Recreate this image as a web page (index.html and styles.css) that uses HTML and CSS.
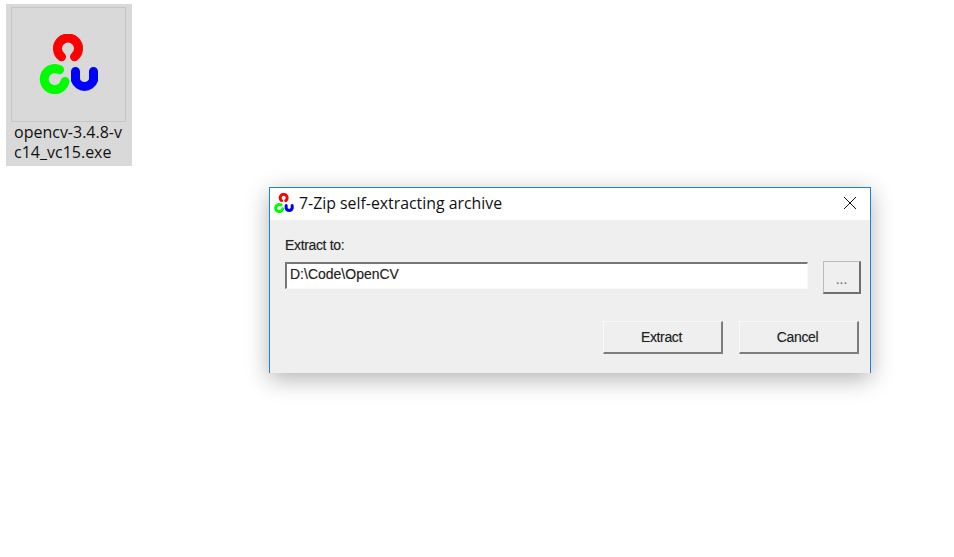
FILE: index.html
```html
<!DOCTYPE html>
<html lang="en">
<head>
<meta charset="utf-8">
<title>7-Zip self-extracting archive</title>
<link rel="stylesheet" href="styles.css">
</head>
<body>
<svg class="defs" width="0" height="0" aria-hidden="true">
  <symbol id="logo" viewBox="39 34 60 60">
    <path class="arc red" d="M61.500 56.750A10.500 10.500 0 1 1 74.500 56.750"/>
    <path class="arc green" d="M59.600 69.800A10.500 10.500 0 1 0 65 81.500"/>
    <path class="arc blue" d="M75.500 71.500V80A9.500 9.500 0 0 0 93.500 80V71.500"/>
  </symbol>
</svg>

<figure class="file">
  <div class="thumb"><svg class="logo-big"><use href="#logo"/></svg></div>
  <figcaption class="file-name">opencv-3.4.8-v<br>c14_vc15.exe</figcaption>
</figure>

<section class="window">
  <header class="titlebar">
    <svg class="logo-small"><use href="#logo"/></svg>
    <h1 class="title">7-Zip self-extracting archive</h1>
    <svg class="close" viewBox="0 0 14 14"><path d="M1 1L13 13M13 1L1 13"/></svg>
  </header>
  <div class="body">
    <label class="label">Extract to:</label>
    <div class="path-row">
      <div class="path-input">D:\Code\OpenCV</div>
      <button class="btn browse">...</button>
    </div>
    <div class="actions">
      <button class="btn action">Extract</button>
      <button class="btn action">Cancel</button>
    </div>
  </div>
</section>
</body>
</html>
```
FILE: styles.css
```css
html, body { margin: 0; padding: 0; background: #fff; }
body { width: 954px; height: 557px; overflow: hidden; position: relative; }
.defs { position: absolute; }
.arc { fill: none; stroke-width: 9; stroke-linecap: round; }
.red { stroke: #fe0000; }
.green { stroke: #00fe00; }
.blue { stroke: #0000fe; }

.file {
  position: absolute; left: 6px; top: 4px; margin: 0;
  width: 126px; height: 162px; box-sizing: border-box;
  background: #d9d9d9; padding: 3px 5px 0;
}
.thumb {
  width: 115px; height: 115px; box-sizing: border-box;
  border: 1px solid #c6c6c6; display: flex; align-items: center; justify-content: center;
}
.logo-big { width: 60px; height: 60px; margin: 0 0 1px 0; }
.file-name {
  font: 16px/20px "Open Sans", "Noto Sans", sans-serif; color: #111;
  margin: 0 0 0 3px; white-space: nowrap;
}

.window {
  position: absolute; left: 269px; top: 187px; width: 602px; height: 186px;
  box-sizing: border-box; border: solid #1883d7; border-width: 1px 1px 0 1px;
  background: #efefef;
  box-shadow: 0 6px 22px rgba(0,0,0,.3);
  display: flex; flex-direction: column;
}
.titlebar {
  height: 32px; background: #fff; display: flex; align-items: center;
  padding: 0 13px 2px 4px; box-sizing: border-box; flex: none;
}
.logo-small { width: 20px; height: 20px; flex: none; margin-right: 5px; }
.title { margin: 0; font: 400 15.85px/20px "Open Sans", "Noto Sans", sans-serif; color: #111; flex: 1; white-space: nowrap; }
.close { width: 14px; height: 14px; fill: none; stroke: #111; stroke-width: 1; }

.body {
  flex: 1; padding: 17px 9px 0 15px; display: flex; flex-direction: column;
  font: 14px/16px "Liberation Sans", Arial, sans-serif; color: #222;
  text-shadow: 0 0 1px rgba(0,0,0,.25);
}
.label { display: block; height: 16px; letter-spacing: -.35px; }
.path-row { display: flex; margin-top: 9px; gap: 15px; align-items: flex-start; }
.path-input {
  width: 524px; height: 27px; box-sizing: border-box; background: #fff; color: #222;
  border-style: solid; border-width: 2px 1px 1px 2px; border-color: #777 #f7f7f7 #f7f7f7 #777;
  padding: 2px 3px; line-height: 17px;
}
.btn {
  box-sizing: border-box; background: #efefef; color: #222; padding: 0;
  font: 14px/16px "Liberation Sans", Arial, sans-serif; letter-spacing: -.35px;
  text-shadow: inherit;
  border-style: solid; border-width: 1px 2px 2px 1px; border-color: #f9f9f9 #7d7d7d #7d7d7d #f9f9f9;
}
.browse {
  width: 38px; height: 33px; margin-top: -1px; padding-top: 4px; letter-spacing: 0;
  border-color: #bbb #6f6f6f #6f6f6f #bbb; color: #777;
}
.actions { display: flex; justify-content: flex-end; gap: 16px; margin-top: 27px; padding-right: 2px; }
.action { width: 120px; height: 33px; padding-right: 2px; }
```
